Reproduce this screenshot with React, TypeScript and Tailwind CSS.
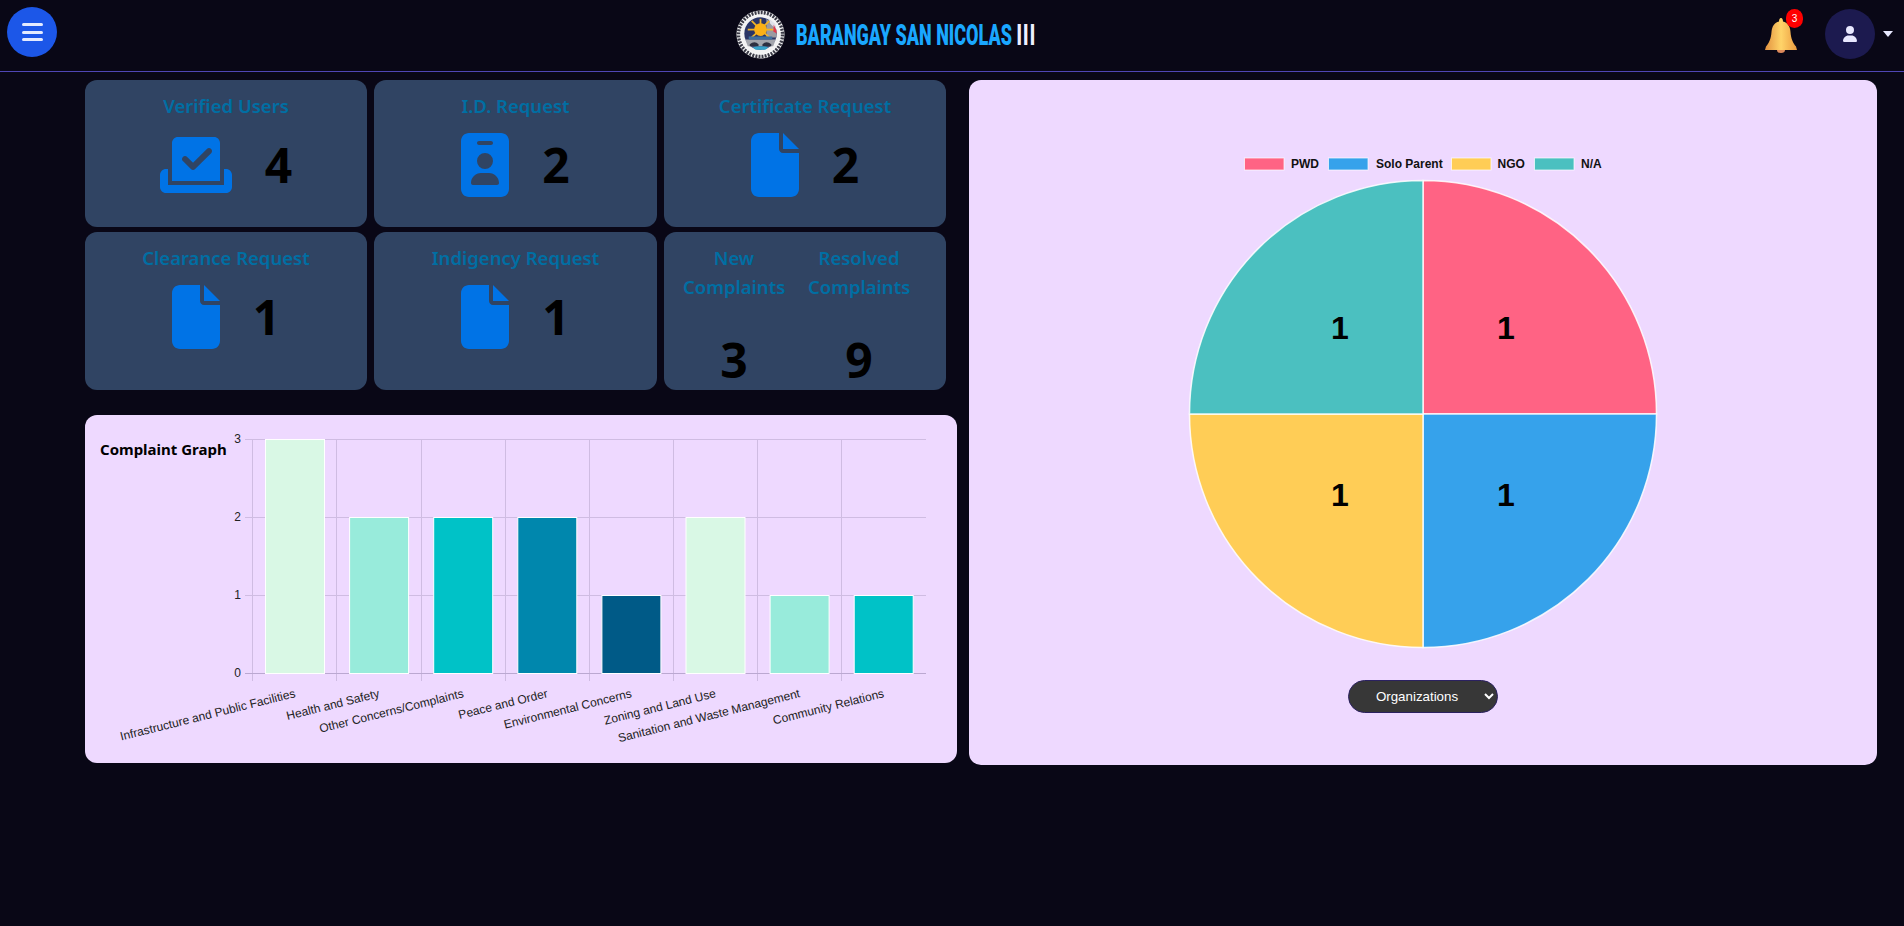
import type { ReactNode } from "react";
import { FaCheckToSlot, FaFile, FaIdBadge, FaUser } from "react-icons/fa6";

const BARS = [
  { label: "Infrastructure and Public Facilities", value: 3, color: "#d9f8e5" },
  { label: "Health and Safety", value: 2, color: "#98ebdb" },
  { label: "Other Concerns/Complaints", value: 2, color: "#00c2c7" },
  { label: "Peace and Order", value: 2, color: "#0087ad" },
  { label: "Environmental Concerns", value: 1, color: "#005a87" },
  { label: "Zoning and Land Use", value: 2, color: "#d9f8e5" },
  { label: "Sanitation and Waste Management", value: 1, color: "#98ebdb" },
  { label: "Community Relations", value: 1, color: "#00c2c7" },
];

const GRID_X = [252.5, 336.5, 421.5, 505.5, 589.5, 673.5, 757.5, 841.5];

const LEGEND = [
  { label: "PWD", color: "#ff6384", box: 1244.5, text: 1291 },
  { label: "Solo Parent", color: "#36a2eb", box: 1328.5, text: 1376 },
  { label: "NGO", color: "#ffcd56", box: 1451.5, text: 1497.5 },
  { label: "N/A", color: "#4bc0c0", box: 1534.5, text: 1581 },
];

function Seal() {
  return (
    <svg viewBox="0 0 50 50" className="h-[49px] w-[49px] flex-none">
      <circle cx="25" cy="25" r="24.5" fill="#f6f6f6" />
      <circle cx="25" cy="25" r="22.5" fill="none" stroke="#3a3a46" strokeWidth="3.500" strokeDasharray="2 1.200" />
      <circle cx="25" cy="25" r="19.500" fill="#f2f2f2" />
      <circle cx="25" cy="24" r="16.500" fill="#2a3566" />
      <path d="M31 9 L40 16 L41.500 28 L31 28 Z" fill="#9a9aa2" />
      <path d="M33 8.500 L40 14 L41 20 L35 14 Z" fill="#dfe1e8" />
      <path d="M38.500 15 L41 20 L41.500 24 L38 22 Z" fill="#e33a4c" />
      <g stroke="#f0b429" strokeWidth="1.800">
        <path d="M25 20 L25 9" />
        <path d="M25 20 L38 20" />
        <path d="M25 20 L12 20" />
        <path d="M25 20 L16 11" />
        <path d="M25 20 L34 11" />
        <path d="M25 20 L16 28" />
        <path d="M25 20 L34 28" />
      </g>
      <circle cx="25" cy="20" r="6.500" fill="#fbb116" />
      <path d="M9.500 30 L40.500 30 L38 37 L12 37 Z" fill="#a3a5ac" />
      <path d="M13 27 L37 27 L37 30 L13 30 Z" fill="#3f6f9e" />
      <path d="M14 35 Q19 31 23 35 L23 37 L14 37 Z M27 35 Q31 31 36 35 L36 37 L27 37 Z" fill="#2d3040" />
      <path d="M17 38 Q25 36 33 38 L30 40.500 L20 40.500 Z" fill="#38a3c9" />
    </svg>
  );
}

function Bell() {
  return (
    <svg viewBox="0 0 32 35" className="h-[35px] w-8">
      <defs>
        <linearGradient id="bell-body" x1="0" y1="0" x2="1" y2="0">
          <stop offset="0" stopColor="#e2913f" />
          <stop offset="0.5" stopColor="#ffd469" />
          <stop offset="1" stopColor="#eb9b40" />
        </linearGradient>
      </defs>
      <ellipse cx="16" cy="32" rx="4" ry="3" fill="#dd8a5c" />
      <path
        d="M16 0C17.500 0 18 2 18 3.500C22.500 4.500 25 8 25.500 14C26 21 28 25 31 28.500L32 32L0 32L1 28.500C4 25 6 21 6.500 14C7 8 9.500 4.500 14 3.500C14 2 14.500 0 16 0Z"
        fill="url(#bell-body)"
      />
    </svg>
  );
}

function Header() {
  return (
    <header className="flex h-[72px] items-start border-b border-[#4f46b5] pr-[11px] pl-[7px]">
      <button className="mt-[7px] flex h-[50px] w-[50px] flex-none flex-col items-center justify-center gap-[4.5px] rounded-full bg-[#1c57e8]">
        <span className="h-[3px] w-[21px] rounded-full bg-[#e4ebff]" />
        <span className="h-[3px] w-[21px] rounded-full bg-[#e4ebff]" />
        <span className="h-[3px] w-[21px] rounded-full bg-[#e4ebff]" />
      </button>
      <div className="mt-[10px] ml-[679px] flex items-center">
        <Seal />
        <div className="ml-[11px] w-[237px] whitespace-nowrap">
          <span className="inline-block origin-left scale-x-[.6] font-['Roboto',sans-serif] text-[30px] leading-[48px] font-black text-[#1aa7ff]">
            BARANGAY SAN NICOLAS <span className="tracking-[2px] text-[#eef0ff]">III</span>
          </span>
        </div>
      </div>
      <div className="ml-auto flex items-center">
        <div className="relative mt-[9px] h-[50px] w-8 pt-[9px]">
          <Bell />
          <span className="absolute top-0 left-[21px] flex h-[19px] w-[17px] items-center justify-center rounded-full bg-[#f00] font-['Liberation_Sans',sans-serif] text-[10px] text-white">
            3
          </span>
        </div>
        <div className="mt-[9px] ml-7 flex h-[50px] w-[50px] items-center justify-center rounded-full bg-[#1c1a4f]">
          <FaUser className="h-4 w-[14px] text-[#e8e8ff]" />
        </div>
        <span className="mt-[9px] ml-2 h-0 w-0 border-x-[5px] border-t-[6px] border-x-transparent border-t-[#e8e8ff]" />
      </div>
    </header>
  );
}

function StatCard({ title, icon, value }: { title: string; icon: ReactNode; value: number }) {
  return (
    <div className="rounded-xl bg-[#304463] pt-[12px] text-center">
      <p className="text-[18.5px] leading-[28px] font-semibold text-[#006fa3]">{title}</p>
      <div className="mt-[13px] flex items-start justify-center gap-[33px]">
        {icon}
        <span className="text-[48px] leading-[64px] font-bold text-black">{value}</span>
      </div>
    </div>
  );
}

function StatGrid() {
  const fileIcon = <FaFile className="h-16 w-12 text-[#0073e6]" />;
  return (
    <div className="grid w-[861px] grid-cols-[282px_283px_282px] grid-rows-[147px_158px] gap-x-[7px] gap-y-[5px]">
      <StatCard title="Verified Users" value={4} icon={<FaCheckToSlot className="h-16 w-[72px] text-[#0073e6]" />} />
      <StatCard title="I.D. Request" value={2} icon={<FaIdBadge className="h-16 w-12 text-[#0073e6]" />} />
      <StatCard title="Certificate Request" value={2} icon={fileIcon} />
      <StatCard title="Clearance Request" value={1} icon={fileIcon} />
      <StatCard title="Indigency Request" value={1} icon={fileIcon} />
      <div className="flex gap-[23px] rounded-xl bg-[#304463] pt-[11px] pl-[19px] text-center">
        {[
          { a: "New", b: "Complaints", value: 3 },
          { a: "Resolved", b: "Complaints", value: 9 },
        ].map((c) => (
          <div key={c.a} className="w-[102px]">
            <p className="text-[18.5px] leading-[29px] font-semibold whitespace-nowrap text-[#006fa3]">
              {c.a}
              <br />
              {c.b}
            </p>
            <p className="mt-[27px] text-[48px] leading-[64px] font-bold text-black">{c.value}</p>
          </div>
        ))}
      </div>
    </div>
  );
}

function BarChart() {
  const toY = (v: number) => 673.5 - v * 78;
  return (
    <svg
      viewBox="232 425 700 330"
      className="h-[330px] w-[700px] flex-none overflow-visible font-['Liberation_Sans',sans-serif]"
    >
      {[1, 2, 3].map((v) => (
        <line key={v} x1="245" x2="926" y1={toY(v)} y2={toY(v)} stroke="#cfbce2" />
      ))}
      {GRID_X.map((x) => (
        <line key={x} x1={x} x2={x} y1="439" y2="681" stroke="#cfbce2" />
      ))}
      <line x1="245" x2="926" y1="673.500" y2="673.500" stroke="#bba8d1" />
      {BARS.map((b, i) => (
        <rect
          key={b.label}
          x={265.5 + i * 84.1}
          y={toY(b.value)}
          width="59"
          height={b.value * 78}
          fill={b.color}
          stroke="#ffffff"
        />
      ))}
      {[0, 1, 2, 3].map((v) => (
        <text key={v} x="241" y={toY(v) + 3} textAnchor="end" fontSize="12" fill="#222">
          {v}
        </text>
      ))}
      {BARS.map((b, i) => (
        <text
          key={b.label}
          x="0"
          y="0"
          transform={`translate(${296 + i * 84.1} 697) rotate(-14)`}
          textAnchor="end"
          fontSize="12"
          fill="#222"
        >
          {b.label}
        </text>
      ))}
    </svg>
  );
}

function PieChart() {
  const cx = 1423;
  const cy = 414;
  const r = 233.5;
  const slices = [
    { color: "#ff6384", d: `M${cx} ${cy}L${cx} ${cy - r}A${r} ${r} 0 0 1 ${cx + r} ${cy}Z` },
    { color: "#36a2eb", d: `M${cx} ${cy}L${cx + r} ${cy}A${r} ${r} 0 0 1 ${cx} ${cy + r}Z` },
    { color: "#ffcd56", d: `M${cx} ${cy}L${cx} ${cy + r}A${r} ${r} 0 0 1 ${cx - r} ${cy}Z` },
    { color: "#4bc0c0", d: `M${cx} ${cy}L${cx - r} ${cy}A${r} ${r} 0 0 1 ${cx} ${cy - r}Z` },
  ];
  const labels = [
    [1506, 339],
    [1506, 506],
    [1340, 506],
    [1340, 339],
  ];
  return (
    <svg viewBox="1173 150 500 510" className="h-[510px] w-[500px] font-['Liberation_Sans',sans-serif]">
      {LEGEND.map((l) => (
        <g key={l.label}>
          <rect x={l.box} y="158" width="39.500" height="12" fill={l.color} stroke="#ffffff" strokeOpacity="0.7" />
          <text x={l.text} y="168" fontSize="12" fontWeight="700" fill="#111">
            {l.label}
          </text>
        </g>
      ))}
      {slices.map((s) => (
        <path key={s.color} d={s.d} fill={s.color} stroke="#ffffff" strokeOpacity="0.85" strokeWidth="1.500" />
      ))}
      {labels.map(([x, y]) => (
        <text key={`${x}-${y}`} x={x} y={y} textAnchor="middle" fontSize="32" fontWeight="700" fill="#000">
          1
        </text>
      ))}
    </svg>
  );
}

export default function App() {
  return (
    <div className="h-[926px] w-full overflow-hidden bg-[#090716] font-['Noto_Sans',sans-serif]">
      <Header />
      <main className="flex gap-3 pt-2 pl-[85px]">
        <div className="w-[872px] flex-none">
          <StatGrid />
          <section className="mt-[25px] flex h-[348px] rounded-xl bg-[#eed9ff] pt-[10px] pl-[15px]">
            <h2 className="w-[132px] flex-none pt-[13px] text-[15px] leading-[22px] font-bold text-black">
              Complaint Graph
            </h2>
            <BarChart />
          </section>
        </div>
        <section className="flex h-[685px] w-[908px] flex-none flex-col items-center rounded-xl bg-[#eed9ff] pt-[70px]">
          <PieChart />
          <select className="mt-5 h-[33px] w-[150px] rounded-full border border-[#2b2160] bg-[#373737] text-center font-['Liberation_Sans',sans-serif] text-[13.33px] text-white">
            <option>Organizations</option>
          </select>
        </section>
      </main>
    </div>
  );
}
